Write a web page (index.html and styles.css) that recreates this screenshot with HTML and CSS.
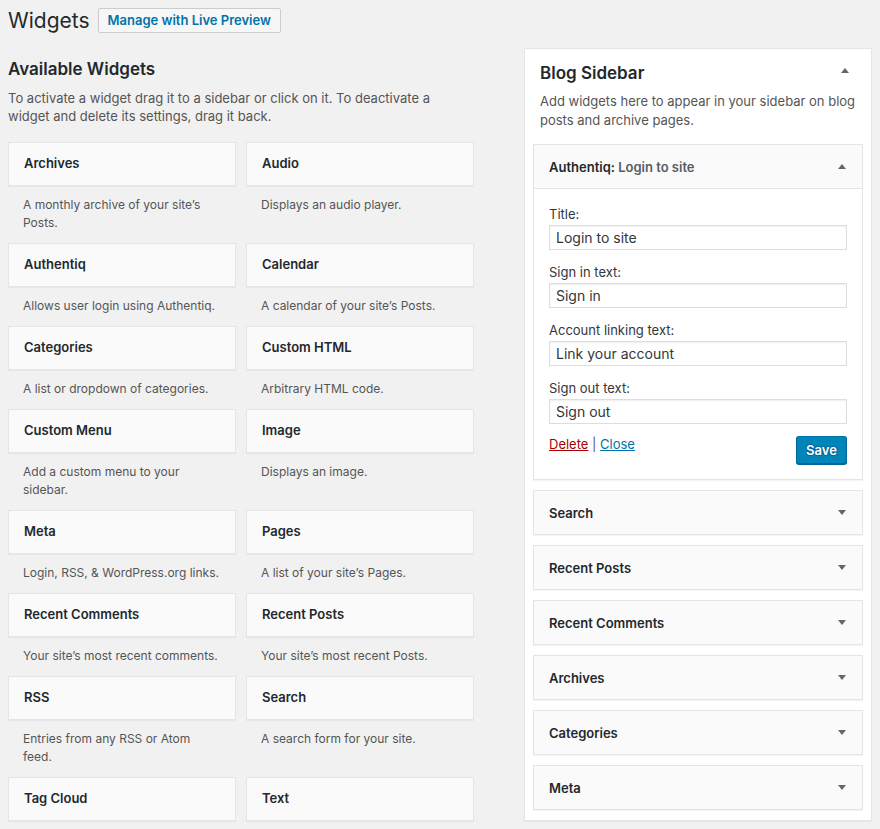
FILE: index.html
```html
<!DOCTYPE html>
<html lang="en">
<head>
<meta charset="utf-8">
<title>Widgets</title>
<link rel="stylesheet" href="styles.css">
</head>
<body>
<div class="wrap">
  <div class="page-header">
    <h1 class="page-title">Widgets</h1>
    <a class="title-action" href="#">Manage with Live Preview</a>
  </div>
  <div class="main">
    <section class="available">
      <h2 class="section-title">Available Widgets</h2>
      <p class="section-desc">To activate a widget drag it to a sidebar or click on it. To deactivate a widget and delete its settings, drag it back.</p>
      <div class="widget-grid">
        <div class="widget-item"><div class="widget-card">Archives</div><div class="widget-desc">A monthly archive of your site’s Posts.</div></div>
        <div class="widget-item"><div class="widget-card">Audio</div><div class="widget-desc">Displays an audio player.</div></div>
        <div class="widget-item"><div class="widget-card">Authentiq</div><div class="widget-desc">Allows user login using Authentiq.</div></div>
        <div class="widget-item"><div class="widget-card">Calendar</div><div class="widget-desc">A calendar of your site’s Posts.</div></div>
        <div class="widget-item"><div class="widget-card">Categories</div><div class="widget-desc">A list or dropdown of categories.</div></div>
        <div class="widget-item"><div class="widget-card">Custom HTML</div><div class="widget-desc">Arbitrary HTML code.</div></div>
        <div class="widget-item"><div class="widget-card">Custom Menu</div><div class="widget-desc">Add a custom menu to your sidebar.</div></div>
        <div class="widget-item"><div class="widget-card">Image</div><div class="widget-desc">Displays an image.</div></div>
        <div class="widget-item"><div class="widget-card">Meta</div><div class="widget-desc">Login, RSS, &amp; WordPress.org links.</div></div>
        <div class="widget-item"><div class="widget-card">Pages</div><div class="widget-desc">A list of your site’s Pages.</div></div>
        <div class="widget-item"><div class="widget-card">Recent Comments</div><div class="widget-desc">Your site’s most recent comments.</div></div>
        <div class="widget-item"><div class="widget-card">Recent Posts</div><div class="widget-desc">Your site’s most recent Posts.</div></div>
        <div class="widget-item"><div class="widget-card">RSS</div><div class="widget-desc">Entries from any RSS or Atom feed.</div></div>
        <div class="widget-item"><div class="widget-card">Search</div><div class="widget-desc">A search form for your site.</div></div>
        <div class="widget-item"><div class="widget-card">Tag Cloud</div></div>
        <div class="widget-item"><div class="widget-card">Text</div></div>
      </div>
    </section>

    <section class="sidebar">
      <div class="sidebar-head">
        <h2 class="sidebar-title">Blog Sidebar</h2>
        <span class="arrow arrow-up sidebar-arrow"></span>
      </div>
      <p class="sidebar-desc">Add widgets here to appear in your sidebar on blog posts and archive pages.</p>

      <div class="sb-widget open">
        <div class="sb-widget-top">
          <span class="sb-widget-title">Authentiq: <span class="in-title">Login to site</span></span>
          <span class="arrow arrow-up"></span>
        </div>
        <div class="sb-widget-body">
          <div class="field"><label class="field-label">Title:</label><input class="field-input" type="text" value="Login to site"></div>
          <div class="field"><label class="field-label">Sign in text:</label><input class="field-input" type="text" value="Sign in"></div>
          <div class="field"><label class="field-label">Account linking text:</label><input class="field-input" type="text" value="Link your account"></div>
          <div class="field field-last"><label class="field-label">Sign out text:</label><input class="field-input" type="text" value="Sign out"></div>
          <div class="actions">
            <div class="action-links"><a class="link-delete" href="#">Delete</a> | <a class="link-close" href="#">Close</a></div>
            <button class="btn-save" type="button">Save</button>
          </div>
        </div>
      </div>

      <div class="sb-widget"><div class="sb-widget-top"><span class="sb-widget-title">Search</span><span class="arrow arrow-down"></span></div></div>
      <div class="sb-widget"><div class="sb-widget-top"><span class="sb-widget-title">Recent Posts</span><span class="arrow arrow-down"></span></div></div>
      <div class="sb-widget"><div class="sb-widget-top"><span class="sb-widget-title">Recent Comments</span><span class="arrow arrow-down"></span></div></div>
      <div class="sb-widget"><div class="sb-widget-top"><span class="sb-widget-title">Archives</span><span class="arrow arrow-down"></span></div></div>
      <div class="sb-widget"><div class="sb-widget-top"><span class="sb-widget-title">Categories</span><span class="arrow arrow-down"></span></div></div>
      <div class="sb-widget"><div class="sb-widget-top"><span class="sb-widget-title">Meta</span><span class="arrow arrow-down"></span></div></div>
    </section>
  </div>
</div>
</body>
</html>
```

FILE: styles.css
```css
* { box-sizing: border-box; }
html, body { margin: 0; padding: 0; }
body {
  background: #f1f1f1;
  color: #444;
  font-family: Inter, Roboto, "Noto Sans", sans-serif;
  font-size: 13px;
  line-height: 18px;
  overflow: hidden;
  height: 829px;
}
.wrap { padding: 0 8px; }

.page-header {
  display: flex;
  align-items: center;
  height: 40px;
}
.page-title {
  margin: 0;
  font-size: 21px;
  font-weight: 400;
  line-height: 29px;
  color: #23282d;
}
.title-action {
  margin-left: 8px;
  height: 25px;
  line-height: 23px;
  padding: 0 9px;
  border: 1px solid #ccc;
  border-radius: 2px;
  background: #f7f7f7;
  color: #0073aa;
  font-size: 13px;
  font-weight: 600;
  text-decoration: none;
}

.main {
  display: flex;
  margin-top: 8px;
  gap: 50px;
  align-items: flex-start;
}

.available { width: 466px; }
.section-title {
  margin: 9px 0 0;
  font-size: 17px;
  font-weight: 600;
  line-height: 24px;
  color: #23282d;
}
.section-desc {
  margin: 8px 0 0;
  color: #555;
  line-height: 18px;
}
.widget-grid {
  margin-top: 17px;
  display: grid;
  grid-template-columns: 228px 228px;
  column-gap: 10px;
}
.widget-card {
  height: 44px;
  line-height: 40px;
  padding: 0 15px;
  background: #fafafa;
  border: 1px solid #e5e5e5;
  box-shadow: 0 1px 1px rgba(0,0,0,.04);
  font-weight: 600;
  color: #23282d;
}
.widget-desc {
  padding: 10px 15px 11px;
  font-size: 12px;
  line-height: 18px;
  color: #555;
}

.sidebar {
  width: 349px;
  background: #fff;
  border: 1px solid #e5e5e5;
  box-shadow: 0 1px 1px rgba(0,0,0,.04);
  padding: 0 8px 10px;
}
.sidebar-head {
  display: flex;
  align-items: center;
  justify-content: space-between;
  padding: 12px 14px 0 7px;
}
.sidebar-title {
  margin: 0;
  font-size: 17px;
  font-weight: 600;
  line-height: 24px;
  color: #23282d;
}
.sidebar-arrow { margin-top: -5px; }
.sidebar-desc {
  margin: 7px 0 0;
  padding: 0 7px;
  line-height: 19px;
  color: #555;
}

.arrow {
  width: 0;
  height: 0;
  border-left: 4px solid transparent;
  border-right: 4px solid transparent;
}
.arrow-up { border-bottom: 5px solid #666; }
.arrow-down { border-top: 5px solid #666; }

.sb-widget {
  margin-top: 10px;
  background: #fafafa;
  border: 1px solid #e5e5e5;
  box-shadow: 0 1px 1px rgba(0,0,0,.04);
}
.sb-widget.open { margin-top: 14px; }
.sb-widget-top {
  height: 43px;
  display: flex;
  align-items: center;
  justify-content: space-between;
  padding: 0 16px 0 15px;
}
.sb-widget-title {
  font-weight: 600;
  color: #23282d;
}
.in-title { color: #555d66; }

.sb-widget-body {
  background: #fff;
  border-top: 1px solid #e5e5e5;
  padding: 16px 15px 15px;
}
.field { margin-bottom: 13px; }
.field-last { margin-bottom: 12px; }
.field-label {
  display: block;
  line-height: 18px;
  color: #32373c;
}
.field-input {
  display: block;
  width: 100%;
  height: 25px;
  margin: 2px 0 0;
  padding: 0 6px;
  border: 1px solid #ddd;
  box-shadow: inset 0 1px 2px rgba(0,0,0,.07);
  background: #fff;
  color: #32373c;
  font-family: inherit;
  font-size: 14px;
  outline: none;
}
.actions {
  display: flex;
  justify-content: space-between;
  align-items: flex-start;
}
.action-links {
  line-height: 18px;
  margin-top: -1px;
  color: #555;
}
.link-delete { color: #a00; text-decoration: underline; }
.link-close { color: #0073aa; text-decoration: underline; }
.btn-save {
  width: 51px;
  height: 28px;
  padding: 0;
  border: 1px solid #0073aa;
  border-color: #0073aa #006799 #006799;
  border-radius: 3px;
  background: #0085ba;
  box-shadow: 0 1px 0 #006799;
  color: #fff;
  font-family: inherit;
  font-size: 13px;
  font-weight: 600;
  text-shadow: 0 -1px 1px #006799, 1px 0 1px #006799, 0 1px 1px #006799, -1px 0 1px #006799;
}
```
